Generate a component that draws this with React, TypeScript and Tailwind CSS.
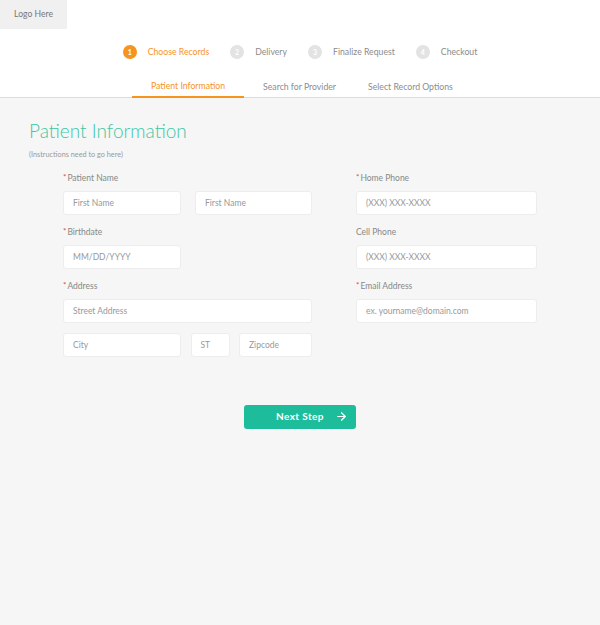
import { ArrowRight } from "lucide-react";

const steps = [
  { n: 1, label: "Choose Records", active: true },
  { n: 2, label: "Delivery", active: false },
  { n: 3, label: "Finalize Request", active: false },
  { n: 4, label: "Checkout", active: false },
];

const tabs = [
  { label: "Patient Information", active: true, pad: "px-[19px]" },
  { label: "Search for Provider", active: false, pad: "pl-[19px] pr-[13px]" },
  { label: "Select Record Options", active: false, pad: "px-[19px]" },
];

function Label({ text, required }: { text: string; required?: boolean }) {
  return (
    <div className="h-[13px] mb-[6px] flex items-center text-[8.5px] text-[#888] leading-none">
      {required && <span className="text-[#e8424e] mr-[1px] text-[8px] -mt-[3px]">*</span>}
      {text}
    </div>
  );
}

function Field({ placeholder, className }: { placeholder: string; className: string }) {
  return (
    <div
      className={
        "h-[24px] bg-white rounded-[3px] border border-[#ededed] pl-[9px] flex items-center text-[8.5px] text-[#999] " +
        className
      }
    >
      {placeholder}
    </div>
  );
}

export default function App() {
  return (
    <div className="min-h-[625px] bg-[#f5f6f5] font-[Lato,sans-serif]">
      <header className="bg-white border-b border-[#dcdcdc]">
        <div className="w-[67px] h-[29px] bg-[#f0f0f0] flex items-center justify-center text-[8.6px] text-[#777]">
          Logo Here
        </div>

        <div className="mt-[16px] flex justify-center items-center">
          {steps.map((s, i) => (
            <div key={s.n} className={"flex items-center " + (i > 0 ? "ml-[21px]" : "")}>
              <div
                className={
                  "w-[14px] h-[14px] rounded-full flex items-center justify-center text-[7px] font-bold text-white " +
                  (s.active ? "bg-[#f7941d]" : "bg-[#e3e3e3]")
                }
              >
                {s.n}
              </div>
              <span
                className={
                  "ml-[11px] text-[8.7px] " + (s.active ? "text-[#f7941d]" : "text-[#8c8c8c]")
                }
              >
                {s.label}
              </span>
            </div>
          ))}
        </div>

        <div className="mt-[15px] flex pl-[132px]">
          {tabs.map((t) => (
            <div
              key={t.label}
              className={
                "h-[24px] pt-px flex items-center text-[8.7px] -mb-px " +
                t.pad +
                " " +
                (t.active ? "text-[#f7941d] border-b-2 border-[#f7941d]" : "text-[#8c8c8c]")
              }
            >
              {t.label}
            </div>
          ))}
        </div>
      </header>

      <main className="px-[29px] pt-[20px]">
        <h1 className="text-[19px] leading-[26px] text-[#3dc7a4] font-light">Patient Information</h1>
        <p className="mt-[6px] text-[7.3px] text-[#9a9a9a]">(Instructions need to go here)</p>

        <div className="mt-[11px] mx-auto w-[474px] flex justify-between">
          <div className="w-[249px]">
            <Label text="Patient Name" required />
            <div className="flex justify-between">
              <Field placeholder="First Name" className="w-[118px]" />
              <Field placeholder="First Name" className="w-[117px]" />
            </div>

            <div className="mt-[11px]">
              <Label text="Birthdate" required />
              <Field placeholder="MM/DD/YYYY" className="w-[118px]" />
            </div>

            <div className="mt-[11px]">
              <Label text="Address" required />
              <Field placeholder="Street Address" className="w-full" />
              <div className="mt-[10px] flex justify-between">
                <Field placeholder="City" className="w-[118px]" />
                <Field placeholder="ST" className="w-[39px]" />
                <Field placeholder="Zipcode" className="w-[73px]" />
              </div>
            </div>
          </div>

          <div className="w-[181px]">
            <Label text="Home Phone" required />
            <Field placeholder="(XXX) XXX-XXXX" className="w-full" />

            <div className="mt-[11px]">
              <Label text="Cell Phone" />
              <Field placeholder="(XXX) XXX-XXXX" className="w-full" />
            </div>

            <div className="mt-[11px]">
              <Label text="Email Address" required />
              <Field placeholder="ex. yourname@domain.com" className="w-full" />
            </div>
          </div>
        </div>

        <div className="mt-[48px] flex justify-center">
          <button className="w-[112px] h-[24px] rounded-[3px] bg-[#1dbc9b] text-white text-[10px] font-bold flex items-center justify-center relative">
            <span className="tracking-[0.4px]">Next Step</span>
            <ArrowRight className="absolute right-[8px] w-[13px] h-[13px]" strokeWidth={2.2} />
          </button>
        </div>
      </main>
    </div>
  );
}
